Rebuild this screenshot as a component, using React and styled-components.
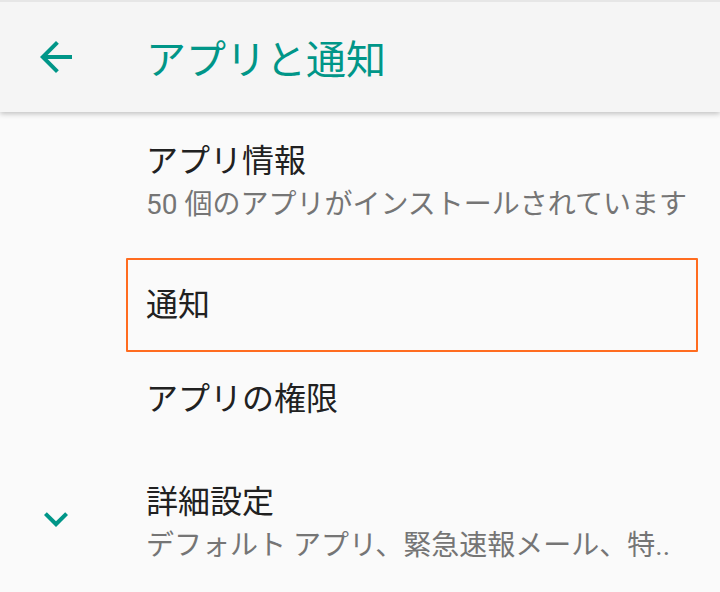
import React from 'react';
import styled, { createGlobalStyle } from 'styled-components';

const GlobalStyle = createGlobalStyle`
  html, body {
    margin: 0;
    padding: 0;
    background: #fafafa;
  }
  body {
    font-family: Roboto, "Noto Sans CJK JP", sans-serif;
    width: 720px;
    height: 592px;
    overflow: hidden;
  }
`;

const Screen = styled.div`
  width: 720px;
  height: 592px;
  background: #fafafa;
  display: flex;
  flex-direction: column;
`;

const Toolbar = styled.header`
  height: 110px;
  border-top: 2px solid #e6e6e6;
  background: #f5f5f5;
  display: flex;
  align-items: center;
  box-shadow: 0 2px 5px rgba(0, 0, 0, 0.22);
  position: relative;
  z-index: 1;
`;

const IconSlot = styled.div`
  width: 146px;
  align-self: stretch;
  display: flex;
  align-items: center;
  padding-left: ${({ pad }) => pad}px;
  box-sizing: border-box;
  flex-shrink: 0;
`;

const Title = styled.h1`
  margin: 0;
  font-size: 40px;
  font-weight: 400;
  color: #009688;
`;

const List = styled.div`
  display: flex;
  flex-direction: column;
`;

const Item = styled.div`
  display: flex;
  align-items: center;
  height: ${({ h }) => h}px;
  box-sizing: border-box;
  margin: ${({ outlined }) => (outlined ? '0 22px 0 126px' : '0')};
  border: ${({ outlined }) => (outlined ? '2px solid #ff6c1f' : 'none')};
  border-radius: 1px;
`;

const Texts = styled.div`
  display: flex;
  flex-direction: column;
  gap: 3px;
  padding-left: ${({ outlined }) => (outlined ? '18px' : '0')};
  margin-top: ${({ shift = 0 }) => shift * 2}px;
  min-width: 0;
`;

const ItemTitle = styled.div`
  font-size: 32px;
  color: #212121;
  line-height: 42px;
`;

const ItemSub = styled.div`
  font-size: 28px;
  color: #757575;
  line-height: 40px;
  white-space: nowrap;
`;

const BackArrow = () => (
  <svg width="48" height="48" viewBox="0 0 24 24">
    <path fill="#009688" d="M20 11H7.83l5.59-5.59L12 4l-8 8 8 8 1.41-1.41L7.83 13H20v-2z" />
  </svg>
);

const Chevron = () => (
  <svg width="48" height="48" viewBox="0 0 24 24">
    <path fill="#009688" d="M16.59 8.59L12 13.17 7.41 8.59 6 10l6 6 6-6z" />
  </svg>
);

export default function App() {
  return (
    <Screen>
      <GlobalStyle />
      <Toolbar>
        <IconSlot pad={32}>
          <BackArrow />
        </IconSlot>
        <Title>アプリと通知</Title>
      </Toolbar>
      <List>
        <Item h={146}>
          <IconSlot pad={0} />
          <Texts shift={-3}>
            <ItemTitle>アプリ情報</ItemTitle>
            <ItemSub>50 個のアプリがインストールされています</ItemSub>
          </Texts>
        </Item>
        <Item h={94} outlined>
          <Texts outlined>
            <ItemTitle>通知</ItemTitle>
          </Texts>
        </Item>
        <Item h={94}>
          <IconSlot pad={0} />
          <Texts>
            <ItemTitle>アプリの権限</ItemTitle>
          </Texts>
        </Item>
        <Item h={146}>
          <IconSlot pad={32}>
            <Chevron />
          </IconSlot>
          <Texts shift={4}>
            <ItemTitle>詳細設定</ItemTitle>
            <ItemSub>デフォルト アプリ、緊急速報メール、特..</ItemSub>
          </Texts>
        </Item>
      </List>
    </Screen>
  );
}
